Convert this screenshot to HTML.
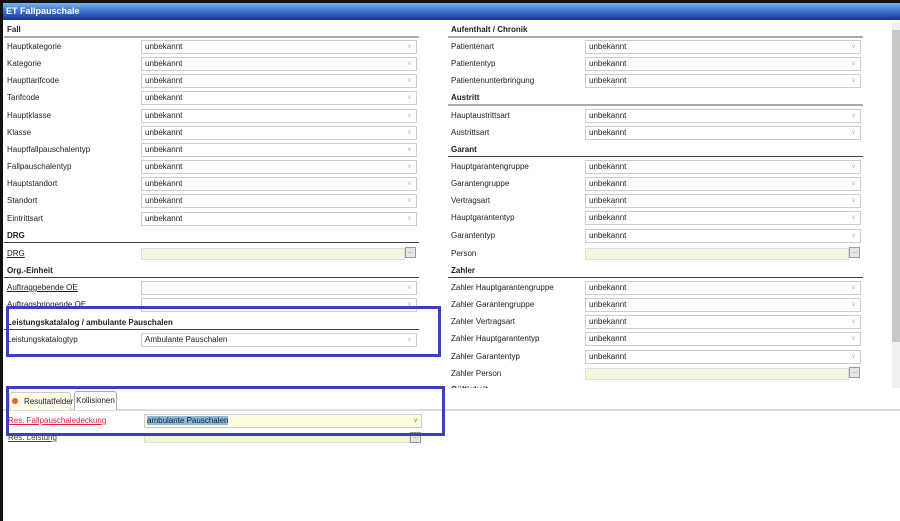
<!DOCTYPE html><html><head><meta charset="utf-8"><style>
*{margin:0;padding:0;box-sizing:border-box}
body{width:900px;height:521px;overflow:hidden;background:#fff;font-family:"Liberation Sans",Arial,sans-serif;font-size:8px;color:#222;position:relative}
.a{position:absolute}
.lbl{position:absolute;line-height:10px;white-space:nowrap}
.hd{position:absolute;font-weight:bold;line-height:10px}
.ln{position:absolute;height:1px;background:#999}
.sel{position:absolute;height:14px;border:1px solid #ccc;background:#fff;line-height:12px;padding-left:3px}
.sel:after{content:"v";position:absolute;right:5px;top:0;color:#aaa;font-size:6px}
.yel{position:absolute;height:12px;border:1px solid #ddd;background:#f5f5dc}
.btn{position:absolute;width:11px;height:11px;border:1px solid #999;background:#e6e6e6;font-size:6px;line-height:8px;text-align:center;color:#666}
u{text-decoration:underline}
</style></head><body>
<div class="a" style="left:0;top:0;width:900px;height:3px;background:#111"></div>
<div class="a" style="left:0;top:0;width:3px;height:521px;background:#111"></div>
<div class="a" style="left:3px;top:3px;width:897px;height:17px;background:linear-gradient(#7ab3e6,#3b6fc9 50%,#1b2f9a);color:#fff;font-weight:bold;font-size:9px;line-height:17px;padding-left:3px">ET Fallpauschale</div>
<div class="a" style="left:892px;top:22px;width:8px;height:366px;background:#f0f0f0"></div>
<div class="a" style="left:892px;top:30px;width:8px;height:312px;background:#c8c8c8"></div>
<div id="c"></div>
<div class="a" style="left:3px;top:409px;width:897px;height:2px;background:#ddd"></div>
<div class="a" style="left:9px;top:392px;width:62px;height:18px;border:1px solid #ccc;border-bottom:none;background:#fffbe6;border-radius:3px 3px 0 0;line-height:18px;padding-left:14px">Resultatfelder</div>
<div class="a" style="left:12px;top:398px;width:6px;height:6px;border-radius:50%;background:#f2602a"></div>
<div class="a" style="left:74px;top:391px;width:43px;height:19px;border:1px solid #aaa;border-bottom:none;background:#fff;border-radius:3px 3px 0 0;line-height:18px;text-align:center">Kollisionen</div>
<div class="lbl" style="left:8px;top:416px;color:#e8203a"><u>Res. Fallpauschaledeckung</u></div>
<div class="a" style="left:144px;top:414px;width:278px;height:14px;border:1px solid #ccc;background:#fdfde0;line-height:12px;padding-left:2px"><span style="background:#8fb8d8;color:#123">ambulante Pauschalen</span><span style="position:absolute;right:4px;top:0;color:#666;font-size:6px">v</span></div>
<div class="lbl" style="left:8px;top:433px;color:#444"><u>Res. Leistung</u></div>
<div class="yel" style="left:144px;top:433px;width:266px;height:10px"></div>
<div class="btn" style="left:410px;top:432px">...</div>
<div class="a" style="left:6px;top:306px;width:435px;height:51px;border:3px solid #3c3fbf"></div>
<div class="a" style="left:6px;top:386px;width:439px;height:50px;border:3px solid #3c3fbf"></div>
<script>
var c=document.getElementById('c'),h='';
function hd(x,y,t){h+='<div class="hd" style="left:'+x+'px;top:'+(y-4)+'px">'+t+'</div><div class="ln" style="left:'+(x-3)+'px;top:'+(y+7)+'px;width:415px;height:'+(t=='Fall'||t=='Aufenthalt / Chronik'||t=='Austritt'?'2px;background:#aaa':'1px;background:#444')+'"></div>';}
function row(x,y,t,v,u){h+='<div class="lbl" style="left:'+x+'px;top:'+(y-4)+'px">'+(u?'<u>'+t+'</u>':t)+'</div>';
 if(v===null){h+='<div class="yel" style="left:'+(x+134)+'px;top:'+(y-5)+'px;width:264px"></div><div class="btn" style="left:'+(x+398)+'px;top:'+(y-6)+'px">...</div>';}
 else h+='<div class="sel" style="left:'+(x+134)+'px;top:'+(y-6)+'px;width:276px">'+v+'</div>';}
var p=17.15,L=7,R=451;
hd(L,29,'Fall');
['Hauptkategorie','Kategorie','Haupttarifcode','Tarifcode','Hauptklasse','Klasse','Hauptfallpauschalentyp','Fallpauschalentyp','Hauptstandort','Standort','Eintrittsart'].forEach(function(t,i){row(L,46+i*p,t,'unbekannt');});
hd(L,235,'DRG');row(L,253,'DRG',null,1);
hd(L,270,'Org.-Einheit');row(L,287,'Auftraggebende OE','',1);row(L,304,'Auftragsbringende OE','',1);
h+='<div class="a" style="left:3px;top:312px;width:440px;height:10px;background:#fff"></div>';
hd(L,322,'Leistungskatalalog / ambulante Pauschalen');row(L,339,'Leistungskatalogtyp','Ambulante Pauschalen');
hd(R,29,'Aufenthalt / Chronik');
row(R,46,'Patientenart','unbekannt');row(R,63,'Patiententyp','unbekannt');row(R,80,'Patientenunterbringung','unbekannt');
hd(R,97,'Austritt');row(R,115,'Hauptaustrittsart','unbekannt');row(R,132,'Austrittsart','unbekannt');
hd(R,149,'Garant');
['Hauptgarantengruppe','Garantengruppe','Vertragsart','Hauptgarantentyp','Garantentyp'].forEach(function(t,i){row(R,166+i*p,t,'unbekannt');});
row(R,253,'Person',null);hd(R,270,'Zahler');
['Zahler Hauptgarantengruppe','Zahler Garantengruppe','Zahler Vertragsart','Zahler Hauptgarantentyp','Zahler Garantentyp'].forEach(function(t,i){row(R,287+i*p,t,'unbekannt');});
row(R,373,'Zahler Person',null);
h+='<div class="hd" style="left:451px;top:385px;height:3px;overflow:hidden">Gültigkeit</div>';
c.innerHTML=h;
</script>
</body></html>
